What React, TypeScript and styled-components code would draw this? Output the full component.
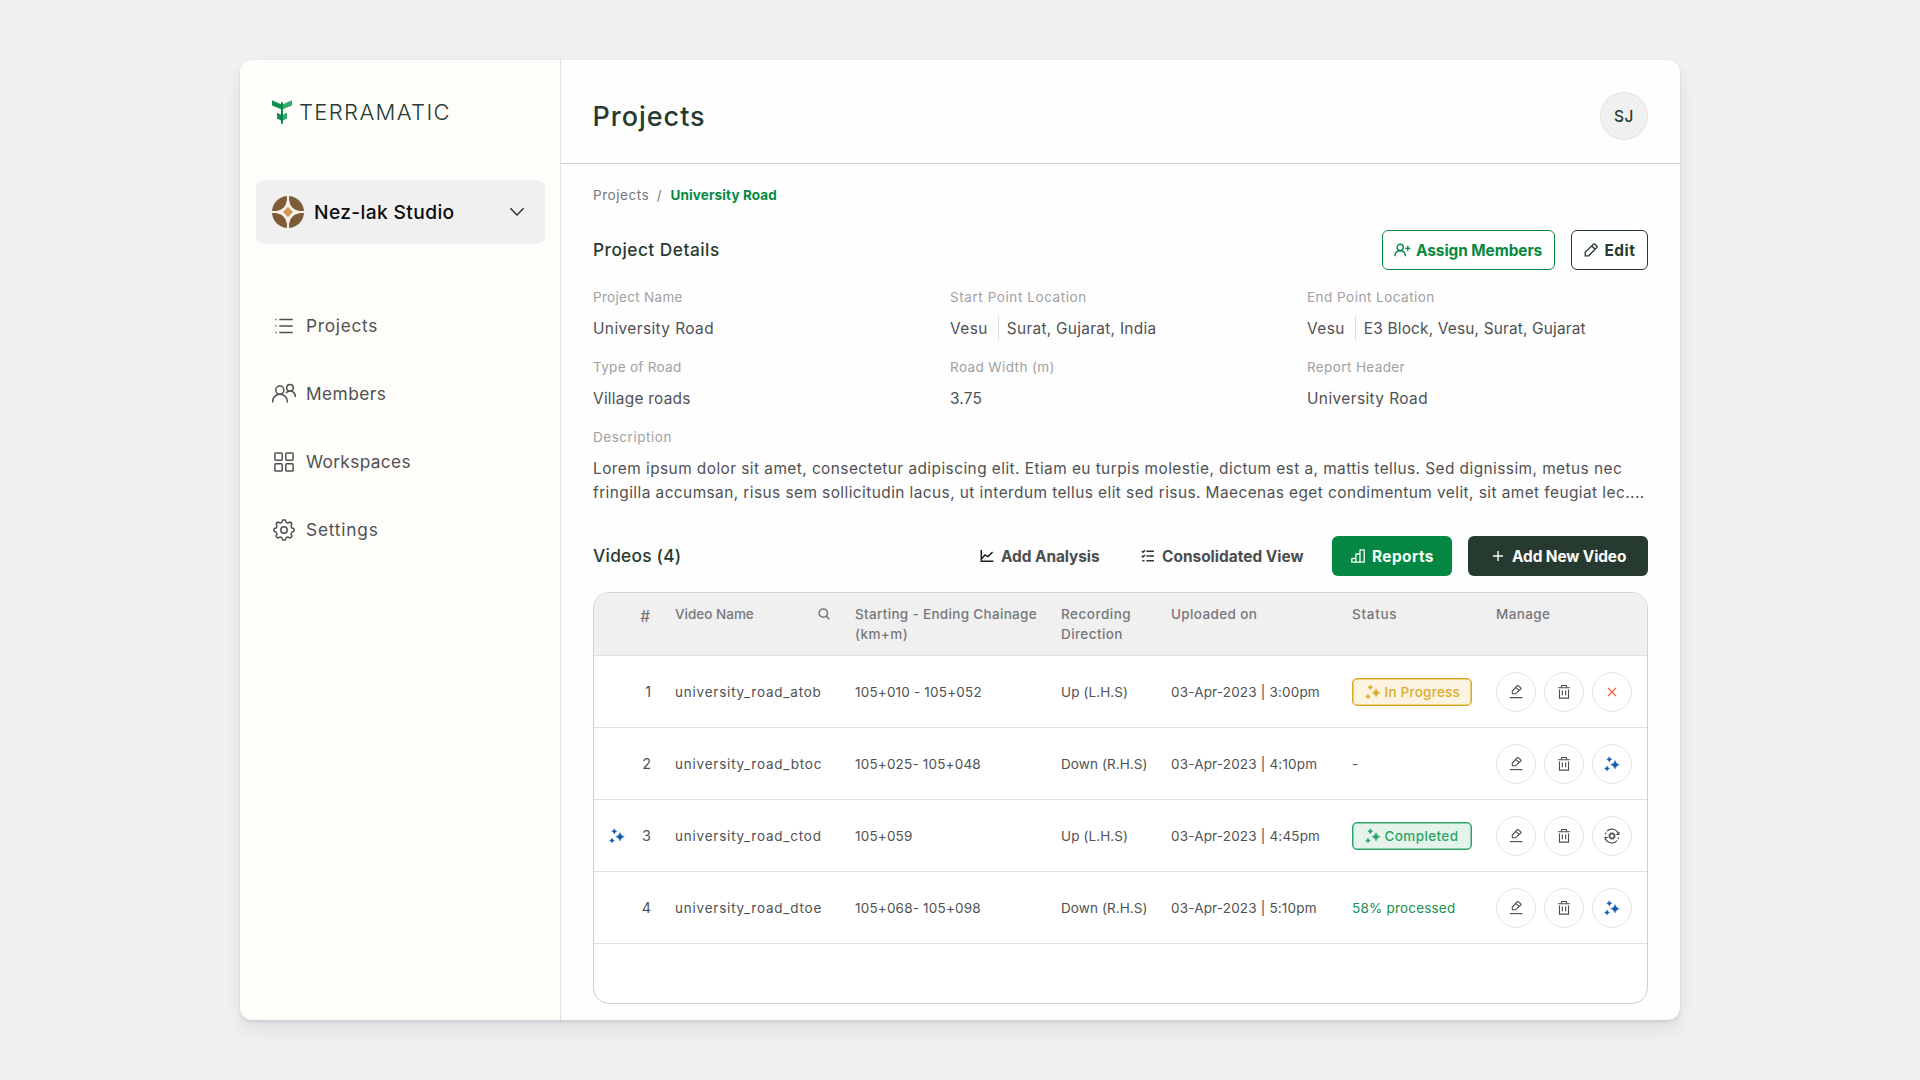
import React from 'react';
import styled, { createGlobalStyle, css } from 'styled-components';

const color = {
  page: '#f0f0f0',
  ink: '#263a30',
  text: '#505152',
  muted: '#77787a',
  label: '#a0a0a1',
  green: '#068a43',
  line: '#dfdfe3',
  frame: '#cfcfd6',
  soft: '#f0f0f1',
  blue: '#0f5cb8',
};

const GlobalStyle = createGlobalStyle`
  * { box-sizing: border-box; }
  html, body { margin: 0; padding: 0; }
  body {
    background: ${color.page};
    font-family: Inter, "Liberation Sans", sans-serif;
    color: ${color.text};
    overflow: hidden;
  }
  svg { display: block; flex: none; }
`;

/* ---------- shared ---------- */

type Track = { $ls?: number };
const tracked = css<Track>`
  letter-spacing: ${(p) => p.$ls ?? 0}px;
  white-space: nowrap;
`;

const Page = styled.div`
  width: 1920px;
  height: 1080px;
  padding: 60px 240px;
`;

const Window = styled.div`
  display: flex;
  width: 1440px;
  height: 960px;
  border-radius: 12px;
  background: #fefefe;
  overflow: hidden;
  box-shadow: 0 0 1px rgba(20, 20, 40, 0.2), 0 2px 3px rgba(30, 35, 55, 0.08),
    0 10px 18px -2px rgba(30, 35, 55, 0.1);
`;

/* ---------- sidebar ---------- */

const Sidebar = styled.aside`
  width: 321px;
  flex: none;
  background: #fefdf9;
  border-right: 1px solid #e1e1e3;
  padding: 40px 15px 0 16px;
`;

const Brand = styled.div`
  display: flex;
  align-items: center;
  gap: 7px;
  height: 24px;
  padding-left: 16px;
`;

const BrandName = styled.span<Track>`
  ${tracked}
  font-size: 22px;
  font-weight: 300;
  line-height: 24px;
  color: ${color.ink};
`;

const Studio = styled.div`
  display: flex;
  align-items: center;
  height: 64px;
  margin-top: 56px;
  padding: 0 20px 0 16px;
  border-radius: 8px;
  background: ${color.soft};
`;

const StudioName = styled.span<Track>`
  ${tracked}
  flex: 1;
  margin-left: 10px;
  font-size: 19.2px;
  font-weight: 500;
  color: #0c0c0c;
`;

const Nav = styled.nav`
  display: flex;
  flex-direction: column;
  gap: 44px;
  margin-top: 70px;
  padding-left: 16px;
`;

const NavItem = styled.a`
  display: flex;
  align-items: center;
  gap: 10px;
  height: 24px;
`;

const NavLabel = styled.span<Track>`
  ${tracked}
  padding-bottom: 2px;
  font-size: 17.3px;
  color: ${color.text};
`;

/* ---------- main ---------- */

const Main = styled.main`
  flex: 1;
  min-width: 0;
`;

const Header = styled.header`
  display: flex;
  align-items: center;
  justify-content: space-between;
  height: 104px;
  padding: 8px 32px 0;
  border-bottom: 1px solid #d0d0d1;
`;

const Title = styled.h1<Track>`
  ${tracked}
  margin: 3px 0 0 -0.5px;
  font-size: 27px;
  font-weight: 500;
  line-height: 36px;
  color: ${color.ink};
`;

const Avatar = styled.div`
  display: flex;
  align-items: center;
  justify-content: center;
  width: 48px;
  height: 48px;
  padding-top: 2px;
  border: 1px solid #e1e1e1;
  border-radius: 50%;
  background: ${color.page};
  font-size: 15.4px;
  font-weight: 500;
  letter-spacing: 0.6px;
  color: ${color.ink};
`;

const Body = styled.div`
  display: flex;
  flex-direction: column;
  padding: 21px 32px 0;
`;

const Crumbs = styled.div`
  display: flex;
  height: 20px;
  font-size: 13.5px;
  line-height: 20px;
  color: ${color.muted};
`;

const Crumb = styled.span<Track & { $active?: boolean }>`
  ${tracked}
  ${(p) => p.$active && `font-weight: 700; color: ${color.green};`}
`;

const Slash = styled.span`
  margin: 0 9px 0 7.5px;
`;

const Bar = styled.div<{ $top: number }>`
  display: flex;
  align-items: center;
  gap: 16px;
  height: 40px;
  margin-top: ${(p) => p.$top}px;
`;

const SectionTitle = styled.h2<Track>`
  ${tracked}
  flex: 1;
  margin: 0;
  padding-bottom: 2px;
  font-size: 17.3px;
  font-weight: 500;
  color: ${color.ink};
`;

type Kind = 'outlineGreen' | 'outlineDark' | 'ghost' | 'green' | 'dark';
const kinds: Record<Kind, string> = {
  outlineGreen: `border: 1px solid ${color.green}; color: ${color.green}; background: #fff;`,
  outlineDark: `border: 1px solid ${color.ink}; color: ${color.ink}; background: #fff;`,
  ghost: `border: 0; color: #4c4d4e; background: none;`,
  green: `border: 0; color: #f6fff8; background: #058642;`,
  dark: `border: 0; color: #fbfbfb; background: ${color.ink};`,
};

const Button = styled.button<Track & { $kind: Kind; $width: number; $pad: number; $gap: number }>`
  ${tracked}
  display: flex;
  align-items: center;
  gap: ${(p) => p.$gap}px;
  width: ${(p) => p.$width}px;
  height: 40px;
  padding: 0 0 0 ${(p) => p.$pad}px;
  border-radius: 6px;
  font-family: inherit;
  font-size: 15.4px;
  font-weight: 700;
  ${(p) => kinds[p.$kind]}
`;

const Details = styled.dl`
  display: grid;
  grid-template-columns: 357px 357px 1fr;
  row-gap: 16px;
  margin: 17px 0 0;
`;

const Field = styled.div<{ $wide?: boolean }>`
  ${(p) => p.$wide && 'grid-column: 1 / -1;'}
`;

const Label = styled.dt<Track>`
  ${tracked}
  font-size: 13.5px;
  line-height: 20px;
  color: ${color.label};
`;

const Value = styled.dd`
  display: flex;
  margin: 10px 0 0;
  font-size: 15.4px;
  line-height: 24px;
`;

const ValueText = styled.span<Track>`
  ${tracked}
`;

const Divider = styled.i`
  width: 1px;
  height: 24px;
  margin: -1px 8px 0 10px;
  background: #dcdcde;
`;

const Description = styled.dd`
  margin: 10px 0 0;
  font-size: 15.4px;
  line-height: 24px;
`;

const Line = styled.span<Track>`
  ${tracked}
  display: block;
`;

/* ---------- table ---------- */

const Table = styled.div`
  height: 412px;
  margin-top: 16px;
  border: 1px solid ${color.frame};
  border-radius: 16px;
  overflow: hidden;
  background: #fff;
`;

const columns = css`
  display: grid;
  grid-template-columns: 57px 156px 182px 86px 157px 120px 136px;
  column-gap: 24px;
  border-bottom: 1px solid ${color.line};
`;

const HeadRow = styled.div`
  ${columns}
  height: 63px;
  padding-top: 11px;
  background: ${color.page};
  font-size: 13.5px;
  font-weight: 500;
  line-height: 20px;
  color: ${color.muted};
`;

const HeadCell = styled.div`
  display: flex;
  justify-content: space-between;
`;

const HeadText = styled.div`
  display: flex;
  flex-direction: column;
`;

const Tracked = styled.span<Track>`
  ${tracked}
`;

const Hash = styled.div`
  padding: 3px 1px 0 0;
  text-align: right;
  font-size: 15.4px;
`;

const SearchSlot = styled.div`
  padding: 4px 1.5px 0 0;
`;

const Row = styled.div`
  ${columns}
  align-items: center;
  height: 72px;
  font-size: 13.5px;
`;

const NumberCell = styled.div`
  display: flex;
  align-items: center;
  justify-content: space-between;
  height: 24px;
  padding-left: 15px;
  color: ${color.text};
`;

const Index = styled.span`
  margin-left: auto;
  font-size: 14.4px;
`;

const Progress = styled.span<Track>`
  ${tracked}
  color: #1a8f4e;
`;

const Chip = styled.span<Track & { $tone: 'amber' | 'green' }>`
  ${tracked}
  display: flex;
  align-items: center;
  gap: 4px;
  width: 120px;
  height: 28px;
  padding-left: 11.5px;
  border-radius: 5px;
  font-weight: 500;
  ${(p) =>
    p.$tone === 'amber'
      ? 'border: 1px solid #dba91f; background: #fcf4e0; color: #dcaa2a; box-shadow: inset 0 0 0 0.5px #dba91f;'
      : 'border: 1px solid #2ba465; background: #e5f4eb; color: #2ba465; box-shadow: inset 0 0 0 0.5px #2ba465;'}
`;

const Actions = styled.div`
  display: flex;
  gap: 8px;
`;

const Circle = styled.button`
  display: flex;
  align-items: center;
  justify-content: center;
  width: 40px;
  height: 40px;
  padding: 0;
  border: 1px solid #e3e4e8;
  border-radius: 50%;
  background: #fff;
  color: #4c4d4e;
`;

/* ---------- drawings ---------- */

const Svg = ({ w, h = w, sw = 1.3, children }: { w: number; h?: number; sw?: number; children: React.ReactNode }) => (
  <svg width={w} height={h} viewBox={`0 0 ${w} ${h}`} fill="none" stroke="currentColor" strokeWidth={sw}>
    {children}
  </svg>
);

const gearPath = (cx: number, cy: number, r: number, amp: number) => {
  const pts: string[] = [];
  for (let i = 0; i < 160; i++) {
    const a = (i / 160) * Math.PI * 2;
    const k = Math.max(-1, Math.min(1, Math.cos(a * 8) * 1.7));
    const rad = r + amp * k;
    pts.push(`${(cx + Math.sin(a) * rad).toFixed(2)} ${(cy - Math.cos(a) * rad).toFixed(2)}`);
  }
  return `M${pts.join('L')}Z`;
};

const star = (x: number, y: number, r: number) => {
  const q = r * 0.2;
  return `M${x} ${y - r}Q${x + q} ${y - q} ${x + r} ${y}Q${x + q} ${y + q} ${x} ${y + r}Q${x - q} ${y + q} ${x - r} ${y}Q${x - q} ${y - q} ${x} ${y - r}Z`;
};

const Sparkles = ({ fill = 'currentColor' }: { fill?: string }) => (
  <svg width="16" height="16" viewBox="0 0 16 16" fill={fill} stroke={fill} strokeWidth="0.4">
    <path d={star(11, 8.8, 4.3)} />
    <path d={star(5.3, 3.3, 2.6)} />
    <path d={star(3, 12.4, 2.5)} />
  </svg>
);

const BrandMark = () => (
  <svg width="20" height="24" viewBox="0 0 20 24">
    <path d="M0 0.3 9 4.2 10 5V9.5L0 5.6Z" fill="#0b9150" />
    <path d="M20 0.3 11 4.2 10 5V9.5L20 5.6Z" fill="#2fab6c" />
    <path d="M5 12.8 10 15V21L5 18.4Z" fill="#0b9150" />
    <path d="M15 12.8 10 15V21L15 18.4Z" fill="#2fab6c" />
    <path d="M9 2.2H10.9V23.7H9Z" fill="#078040" />
  </svg>
);

const StudioMark = () => (
  <svg width="32" height="32" viewBox="0 0 32 32">
    <circle cx="16" cy="16" r="16" fill="#7d5a38" />
    <path d="M16 0V32M0 16H32" stroke="#f4efe8" strokeWidth="2.2" />
    <path
      d="M16 5Q17.5 14.5 27 16Q17.5 17.5 16 27Q14.5 17.5 5 16Q14.5 14.5 16 5Z"
      fill="#f4efe8"
      stroke="#f4efe8"
      strokeWidth="2.4"
    />
    <path d="M16 11 21 16 16 21 11 16Z" fill="#cf9552" />
  </svg>
);

const ChevronIcon = () => (
  <Svg w={16} h={10} sw={1.4}>
    <path d="M1.4 1.3 8 7.9 14.6 1.3" stroke="#2c2d2e" />
  </Svg>
);

const ListIcon = () => (
  <Svg w={24} sw={1.5}>
    <path d="M7.3 5.5H20.7M7.3 12H20.7M7.3 18.4H20.7" />
    <path d="M3.2 5.5H4.9M3.2 12H4.9M3.2 18.4H4.9" opacity="0.7" />
  </Svg>
);

const MembersIcon = () => (
  <Svg w={24} sw={1.5}>
    <circle cx="7.8" cy="8.1" r="4.1" />
    <path d="M.7 20.600V19.300C.7 15.500 3.700 12.300 8 12.300S15.300 15.500 15.300 19.300V20.600" />
    <circle cx="18" cy="5.8" r="3.3" />
    <path d="M14 11C15 9.700 16.400 9.100 18 9.100 21 9.100 23.300 11.500 23.300 14.300V15" />
  </Svg>
);

const BoardsIcon = () => (
  <Svg w={24} sw={1.5}>
    <rect x="2.9" y="2.9" width="7.3" height="7.3" rx="0.9" />
    <rect x="13.8" y="2.9" width="7.3" height="7.3" rx="0.9" />
    <rect x="2.9" y="13.8" width="7.3" height="7.3" rx="0.9" />
    <rect x="13.8" y="13.8" width="7.3" height="7.3" rx="0.9" />
  </Svg>
);

const GearIcon = () => (
  <Svg w={24} sw={1.5}>
    <path d={gearPath(12, 12, 9, 1.1)} strokeLinejoin="round" />
    <circle cx="12" cy="12" r="3.2" />
  </Svg>
);

const AssignIcon = () => (
  <Svg w={17} h={14} sw={1.4}>
    <circle cx="6.2" cy="4.4" r="3.1" />
    <path d="M1 13.2C1 9.8 3.2 7.7 6.2 7.7S11.3 9.8 11.3 13.2M11.2 5.4H16.4M13.8 2.8V8" />
  </Svg>
);

const PencilIcon = () => (
  <Svg w={14} sw={1.3}>
    <path d="M1.2 12.8V9.3L9.7 1Q10.2 .6 10.7 1L13 3.3Q13.4 3.8 13 4.3L4.7 12.8ZM7.8 3 11 6.2" />
  </Svg>
);

const ChartIcon = () => (
  <Svg w={14} sw={1.5}>
    <g stroke="#1c1d1e">
      <path d="M1.3 1V12.3H13.3" />
      <path d="M1.6 9.8 5 6 8 7.6 12.6 3" />
    </g>
  </Svg>
);

const ChecklistIcon = () => (
  <Svg w={14} sw={1.5}>
    <g stroke="#333536">
      <path d="M5.4 2.3H13M5.4 7H13M5.4 11.7H13" />
      <path d="M.8 2.2 2 3.3 4 1.2M.8 6.9 2 8 4 5.9M1.3 11.7H3.5" />
    </g>
  </Svg>
);

const ReportsIcon = () => (
  <Svg w={14} sw={1.3}>
    <path
      d="M.8 13.2V10Q.8 9.5 1.3 9.5H4.9V5.500Q4.900 5 5.400 5H9V1.300Q9 .8 9.500 .8H12.700Q13.200 .8 13.200 1.300V13.200ZM4.900 9.500V13.200M9 5V13.200"
      strokeLinejoin="round"
    />
  </Svg>
);

const PlusIcon = () => (
  <Svg w={12} sw={1.4}>
    <path d="M6 1V11M1 6H11" />
  </Svg>
);

const SearchIcon = () => (
  <Svg w={12} sw={1.5}>
    <circle cx="5.3" cy="5.1" r="4.2" />
    <path d="M8.3 8.1 11.3 11.1" />
  </Svg>
);

const EditLineIcon = () => (
  <Svg w={16} sw={1.1}>
    <path d="M4.3 9.8V7L9.300 1.700Q9.800 1.300 10.300 1.700L12.700 4Q13.200 4.500 12.700 5L7.400 9.800ZM7.800 3.400 11.200 6.700" />
    <path d="M1.8 13.6H14.5" />
  </Svg>
);

const TrashIcon = () => (
  <Svg w={16} sw={1.1}>
    <path d="M1.9 3.8H14.1M5.5 3.6V1.5H10.5V3.6M3.5 5.5V14.1H12.5V5.5M6.4 6.500V11.300M9.600 6.500V11.300" />
  </Svg>
);

const CloseIcon = () => (
  <Svg w={10} sw={1.2}>
    <path d="M1 1 9 9M9 1 1 9" stroke="#ea6440" />
  </Svg>
);

const ReprocessIcon = () => (
  <Svg w={16} sw={1.2}>
    <path d="M3 3.2A6.7 6.7 0 0 1 14.3 5.8M1.3 9.6A6.7 6.7 0 0 0 13 12.6" />
    <path d="M1.3 6.3A6.7 6.7 0 0 1 2 4.6M14.7 9.5A6.7 6.7 0 0 1 14.1 11" />
    <path d="M14.8 3.8V6.3H12.3M1.2 12V9.4H3.7" />
    <circle cx="8" cy="8" r="2.4" strokeWidth="1.5" />
    <circle cx="8" cy="8" r="3.3" strokeWidth="0.8" strokeDasharray="1.3 1.29" />
  </Svg>
);

/* ---------- data ---------- */

const navItems = [
  { label: 'Projects', ls: 0.72, icon: <ListIcon /> },
  { label: 'Members', ls: 0.45, icon: <MembersIcon /> },
  { label: 'Workspaces', ls: 0.36, icon: <BoardsIcon /> },
  { label: 'Settings', ls: 0.82, icon: <GearIcon /> },
];

type Piece = [string, number];
const fields: { label: Piece; value: Piece[] }[] = [
  { label: ['Project Name', 0.3], value: [['University Road', 0.42]] },
  { label: ['Start Point Location', 0.58], value: [['Vesu', 0.45], ['Surat, Gujarat, India', 0.29]] },
  { label: ['End Point Location', 0.48], value: [['Vesu', 0.45], ['E3 Block, Vesu, Surat, Gujarat', 0.18]] },
  { label: ['Type of Road', 0.31], value: [['Village roads', 0.26]] },
  { label: ['Road Width (m)', 0.4], value: [['3.75', 0.19]] },
  { label: ['Report Header', 0.38], value: [['University Road', 0.42]] },
];

const videos = [
  { name: 'university_road_atob', chainage: '105+010 - 105+052', side: 'Up (L.H.S)', date: '03-Apr-2023 | 3:00pm', status: 'progress', action: 'close' },
  { name: 'university_road_btoc', chainage: '105+025- 105+048', side: 'Down (R.H.S)', date: '03-Apr-2023 | 4:10pm', status: 'none', action: 'analyse' },
  { name: 'university_road_ctod', chainage: '105+059', side: 'Up (L.H.S)', date: '03-Apr-2023 | 4:45pm', status: 'completed', action: 'reprocess', marked: true },
  { name: 'university_road_dtoe', chainage: '105+068- 105+098', side: 'Down (R.H.S)', date: '03-Apr-2023 | 5:10pm', status: 'partial', action: 'analyse' },
];

const Status = ({ kind }: { kind: string }) => {
  if (kind === 'progress') return <Chip $tone="amber" $ls={0.24}><Sparkles />In Progress</Chip>;
  if (kind === 'completed') return <Chip $tone="green" $ls={0.38}><Sparkles />Completed</Chip>;
  if (kind === 'partial') return <Progress $ls={0.2}>58% processed</Progress>;
  return <span>-</span>;
};

const lastAction: Record<string, React.ReactNode> = {
  close: <CloseIcon />,
  analyse: <Sparkles fill={color.blue} />,
  reprocess: <ReprocessIcon />,
};

export default function App() {
  return (
    <Page>
      <GlobalStyle />
      <Window>
        <Sidebar>
          <Brand>
            <BrandMark />
            <BrandName $ls={1.36}>TERRAMATIC</BrandName>
          </Brand>
          <Studio>
            <StudioMark />
            <StudioName $ls={0.37}>Nez-lak Studio</StudioName>
            <ChevronIcon />
          </Studio>
          <Nav>
            {navItems.map((item) => (
              <NavItem key={item.label}>
                {item.icon}
                <NavLabel $ls={item.ls}>{item.label}</NavLabel>
              </NavItem>
            ))}
          </Nav>
        </Sidebar>

        <Main>
          <Header>
            <Title $ls={0.98}>Projects</Title>
            <Avatar>SJ</Avatar>
          </Header>
          <Body>
            <Crumbs>
              <Crumb $ls={0.54}>Projects</Crumb>
              <Slash>/</Slash>
              <Crumb $active $ls={0.12}>University Road</Crumb>
            </Crumbs>

            <Bar $top={25}>
              <SectionTitle $ls={0.5}>Project Details</SectionTitle>
              <Button $kind="outlineGreen" $width={173} $pad={10.5} $gap={5.5} $ls={-0.06}>
                <AssignIcon />Assign Members
              </Button>
              <Button $kind="outlineDark" $width={77} $pad={12} $gap={6.5} $ls={0.5}>
                <PencilIcon />Edit
              </Button>
            </Bar>

            <Details>
              {fields.map(({ label, value }) => (
                <Field key={label[0]}>
                  <Label $ls={label[1]}>{label[0]}</Label>
                  <Value>
                    {value.map(([text, ls], i) => (
                      <React.Fragment key={text}>
                        {i > 0 && <Divider />}
                        <ValueText $ls={ls}>{text}</ValueText>
                      </React.Fragment>
                    ))}
                  </Value>
                </Field>
              ))}
              <Field $wide>
                <Label $ls={0.54}>Description</Label>
                <Description>
                  <Line $ls={0.45}>
                    Lorem ipsum dolor sit amet, consectetur adipiscing elit. Etiam eu turpis molestie, dictum est a, mattis tellus. Sed dignissim, metus nec
                  </Line>
                  <Line $ls={0.44}>
                    fringilla accumsan, risus sem sollicitudin lacus, ut interdum tellus elit sed risus. Maecenas eget condimentum velit, sit amet feugiat lec....
                  </Line>
                </Description>
              </Field>
            </Details>

            <Bar $top={31}>
              <SectionTitle $ls={0.26}>Videos (4)</SectionTitle>
              <Button $kind="ghost" $width={145} $pad={12} $gap={7} $ls={-0.06}>
                <ChartIcon />Add Analysis
              </Button>
              <Button $kind="ghost" $width={187} $pad={12} $gap={7} $ls={0.03}>
                <ChecklistIcon />Consolidated View
              </Button>
              <Button $kind="green" $width={120} $pad={19} $gap={7} $ls={0.42}>
                <ReportsIcon />Reports
              </Button>
              <Button $kind="dark" $width={180} $pad={23.5} $gap={8.5} $ls={-0.1}>
                <PlusIcon />Add New Video
              </Button>
            </Bar>

            <Table>
              <HeadRow>
                <Hash>#</Hash>
                <HeadCell>
                  <Tracked>Video Name</Tracked>
                  <SearchSlot><SearchIcon /></SearchSlot>
                </HeadCell>
                <HeadText>
                  <Tracked $ls={0.32}>Starting - Ending Chainage</Tracked>
                  <Tracked $ls={0.42}>(km+m)</Tracked>
                </HeadText>
                <HeadText>
                  <Tracked $ls={0.5}>Recording</Tracked>
                  <Tracked $ls={0.42}>Direction</Tracked>
                </HeadText>
                <Tracked $ls={0.36}>Uploaded on</Tracked>
                <Tracked $ls={0.72}>Status</Tracked>
                <Tracked $ls={0.38}>Manage</Tracked>
              </HeadRow>
              {videos.map((video, i) => (
                <Row key={video.name}>
                  <NumberCell>
                    {video.marked && <Sparkles fill={color.blue} />}
                    <Index>{i + 1}</Index>
                  </NumberCell>
                  <Tracked $ls={0.78}>{video.name}</Tracked>
                  <Tracked $ls={0.19}>{video.chainage}</Tracked>
                  <Tracked $ls={0.1}>{video.side}</Tracked>
                  <Tracked $ls={0.18}>{video.date}</Tracked>
                  <Status kind={video.status} />
                  <Actions>
                    <Circle><EditLineIcon /></Circle>
                    <Circle><TrashIcon /></Circle>
                    <Circle>{lastAction[video.action]}</Circle>
                  </Actions>
                </Row>
              ))}
            </Table>
          </Body>
        </Main>
      </Window>
    </Page>
  );
}
